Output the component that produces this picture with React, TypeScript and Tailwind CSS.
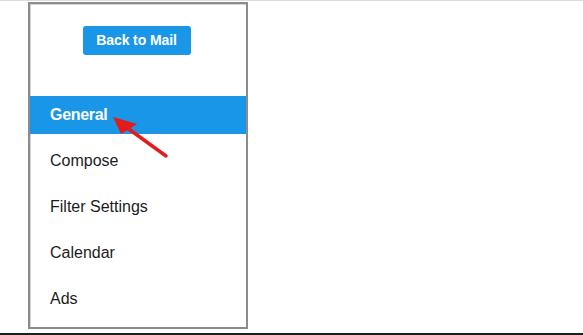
import React from "react";

const items = ["General", "Compose", "Filter Settings", "Calendar", "Ads"];

function SettingsNav() {
  return (
    <div className="relative w-[220px] h-[327px] ml-[28px] border-2 border-[#8c8c8c] bg-white">
      <div className="h-full border border-[#d4d4d4] border-b-0 border-r-0 flex flex-col">
        <div className="flex justify-center pt-[21px] pr-[4px]">
          <button className="w-[108px] h-[29px] rounded-[3px] bg-[#1a96e9] text-white text-[14px] font-bold tracking-[-0.1px]">
            Back to Mail
          </button>
        </div>
        <ul className="mt-[41px] -ml-px flex flex-col gap-[8px]">
          {items.map((item, i) => (
            <li
              key={item}
              className={
                i === 0
                  ? "h-[38px] flex items-center pl-[20px] bg-[#1a96e9] text-white text-[16px] font-bold tracking-[-0.3px]"
                  : "h-[38px] flex items-center pl-[20px] text-[#1c1c1c] text-[16px]"
              }
            >
              {item}
            </li>
          ))}
        </ul>
      </div>
      {/* red pointer arrow */}
      <svg
        className="absolute left-[80px] top-[108px]"
        width="60"
        height="50"
        viewBox="0 0 60 50"
      >
        <line x1="16" y1="15" x2="56" y2="44" stroke="#e31b1b" strokeWidth="3.4" strokeLinecap="round" />
        <polygon points="3,5 27,12 20,16.5 11,22" fill="#e31b1b" />
      </svg>
    </div>
  );
}

export default function App() {
  return (
    <div
      className="w-[583px] h-[335px] bg-white flex flex-col overflow-hidden"
      style={{ fontFamily: '"Liberation Sans", Arial, sans-serif' }}
    >
      <div className="h-px bg-[#dcdcdc]" />
      <div className="h-px" />
      <SettingsNav />
      <div className="h-[4px]" />
      <div className="h-[2px] bg-[#1e1e1e]" />
    </div>
  );
}
